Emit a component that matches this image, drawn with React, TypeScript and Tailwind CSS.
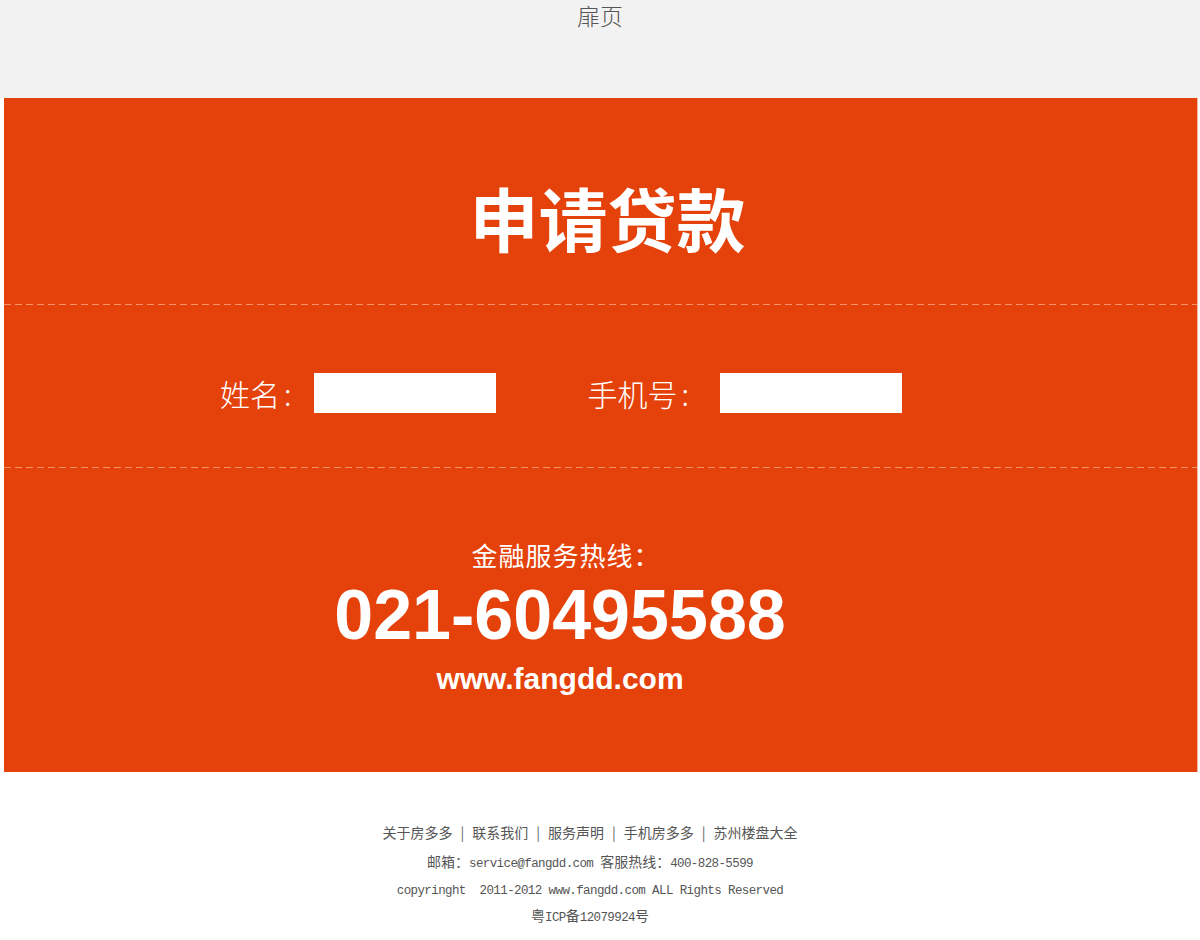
import { FC } from 'react';

const cjk = { fontFamily: '"Noto Sans CJK SC", "Noto Sans", sans-serif' };

const Dash: FC = () => (
	<div className="h-px w-full bg-[repeating-linear-gradient(90deg,#f39468_0_7px,transparent_7px_11px)]" />
);

const Field: FC<{ label: string; className?: string; gap: string }> = ({ label, className, gap }) => (
	<div className={`flex items-center ${className ?? ''}`}>
		<span className="text-[30px] font-light text-white leading-none">{label}</span>
		<span className="text-[30px] font-light text-white leading-none ml-1">:</span>
		<input className={`${gap} h-[40px] w-[182px] bg-white outline-none`} />
	</div>
);

const Mono: FC<{ children: string }> = ({ children }) => (
	<span className="font-['Liberation_Mono'] text-[12.5px] tracking-[-0.6px]">{children}</span>
);

const Sep: FC = () => <span className="mx-[8px] text-[#666]">|</span>;

export default function App() {
	return (
		<div className="min-h-[940px] bg-white" style={cjk}>
			<div className="h-[98px] bg-[#f2f2f2] flex justify-center">
				<span className="mt-[1px] text-[23px] font-light text-[#555] leading-[28px]">扉页</span>
			</div>

			<div className="ml-[4px] w-[1194px] bg-[#e5420b] border-r border-[#f6b59b]">
				<div className="h-[206px] flex justify-center pt-[79px] pl-[14px]">
					<h1 className="text-[69px] font-bold text-white leading-[80px]">申请贷款</h1>
				</div>
				<Dash />
				<div className="h-[162px] flex items-center pl-[216px] pt-[14px]">
					<Field label="姓名" gap="ml-[22px]" />
					<Field label="手机号" gap="ml-[31px]" className="ml-[92px]" />
				</div>
				<Dash />
				<div className="h-[304px] flex flex-col items-center ml-[256px] w-[600px] pt-[69px]">
					<div className="text-[26px] text-white leading-[36px] tracking-[1px] pl-[12px]">金融服务热线：</div>
					<div className="mt-[4px] font-['Liberation_Sans'] font-bold text-[70px] text-white leading-[76px]">
						021-60495588
					</div>
					<div className="mt-[8px] font-['Liberation_Sans'] font-bold text-[30px] text-white leading-[36px]">
						www.fangdd.com
					</div>
				</div>
			</div>

			<div className="flex flex-col items-center pt-[46px] text-[14px] text-[#555] pr-[20px]">
				<div className="leading-[28px] whitespace-pre">
					关于房多多<Sep />联系我们<Sep />服务声明<Sep />手机房多多<Sep />苏州楼盘大全
				</div>
				<div className="leading-[30px] whitespace-pre">
					邮箱：<Mono>service@fangdd.com </Mono>客服热线：<Mono>400-828-5599</Mono>
				</div>
				<div className="-mt-[4px] leading-[26px] whitespace-pre">
					<Mono>copyringht  2011-2012 www.fangdd.com ALL Rights Reserved</Mono>
				</div>
				<div className="-mt-[2px] leading-[26px] whitespace-pre">
					粤<Mono>ICP</Mono>备<Mono>12079924</Mono>号
				</div>
			</div>
		</div>
	);
}
